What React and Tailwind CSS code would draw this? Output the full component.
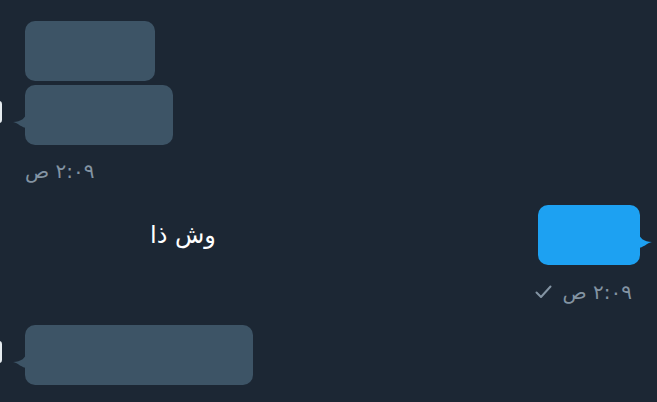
import React from "react";

const font = { fontFamily: '"DejaVu Sans", "Noto Sans", sans-serif' };

function LeftTail({ color }) {
  return (
    <svg className="absolute left-[-12px] bottom-[17px]" width="14" height="17" viewBox="0 0 14 17">
      <path d="M14 0 C13 7 8 11 0 11 C5 12 9 17 14 17 Z" fill={color} />
    </svg>
  );
}

function RightTail({ color }) {
  return (
    <svg className="absolute right-[-12px] bottom-[17px]" width="14" height="17" viewBox="0 0 14 17">
      <path d="M0 0 C1 7 6 11 14 11 C9 12 5 17 0 17 Z" fill={color} />
    </svg>
  );
}

function Edge() {
  return <div className="absolute left-[-4px] top-[16px] h-[22px] w-[6px] rounded-full bg-[#e6ecf0]" />;
}

export default function App() {
  return (
    <div className="relative h-[402px] w-[657px] overflow-hidden bg-[#1c2734]" style={font}>
      <div className="flex flex-col px-[25px] pt-[21px]">
        <div className="h-[60px] w-[130px] rounded-[10px] bg-[#3d5466]" />

        <div className="relative mt-[4px]">
          <div className="absolute left-[-25px] top-0"><Edge /></div>
          <div className="relative h-[60px] w-[148px] rounded-[10px] bg-[#3d5466]">
            <LeftTail color="#3d5466" />
          </div>
        </div>

        <div dir="rtl" className="mt-[14px] self-start text-[20px] leading-[24px] text-[#8394a3]">
          ٢:٠٩ ص
        </div>

        <div className="mt-[22px] mr-[-8px] flex items-center justify-between">
          <div dir="rtl" className="ml-[125px] text-[24px] leading-[30px] text-white">
            وش ذا
          </div>
          <div className="relative h-[60px] w-[102px] rounded-[10px] bg-[#1da1f2]">
            <RightTail color="#1da1f2" />
          </div>
        </div>

        <div className="mt-[15px] flex items-center justify-end gap-[10px] text-[#8394a3]">
          <svg width="17" height="14" viewBox="0 0 17 14">
            <path d="M1.5 7.5 L6 12 L15.5 1.5" fill="none" stroke="#8394a3" strokeWidth="2" strokeLinecap="round" strokeLinejoin="round" />
          </svg>
          <span dir="rtl" className="text-[20px] leading-[24px]">٢:٠٩ ص</span>
        </div>

        <div className="relative mt-[21px]">
          <div className="absolute left-[-25px] top-0"><Edge /></div>
          <div className="relative h-[60px] w-[228px] rounded-[10px] bg-[#3d5466]">
            <LeftTail color="#3d5466" />
          </div>
        </div>
      </div>
    </div>
  );
}
